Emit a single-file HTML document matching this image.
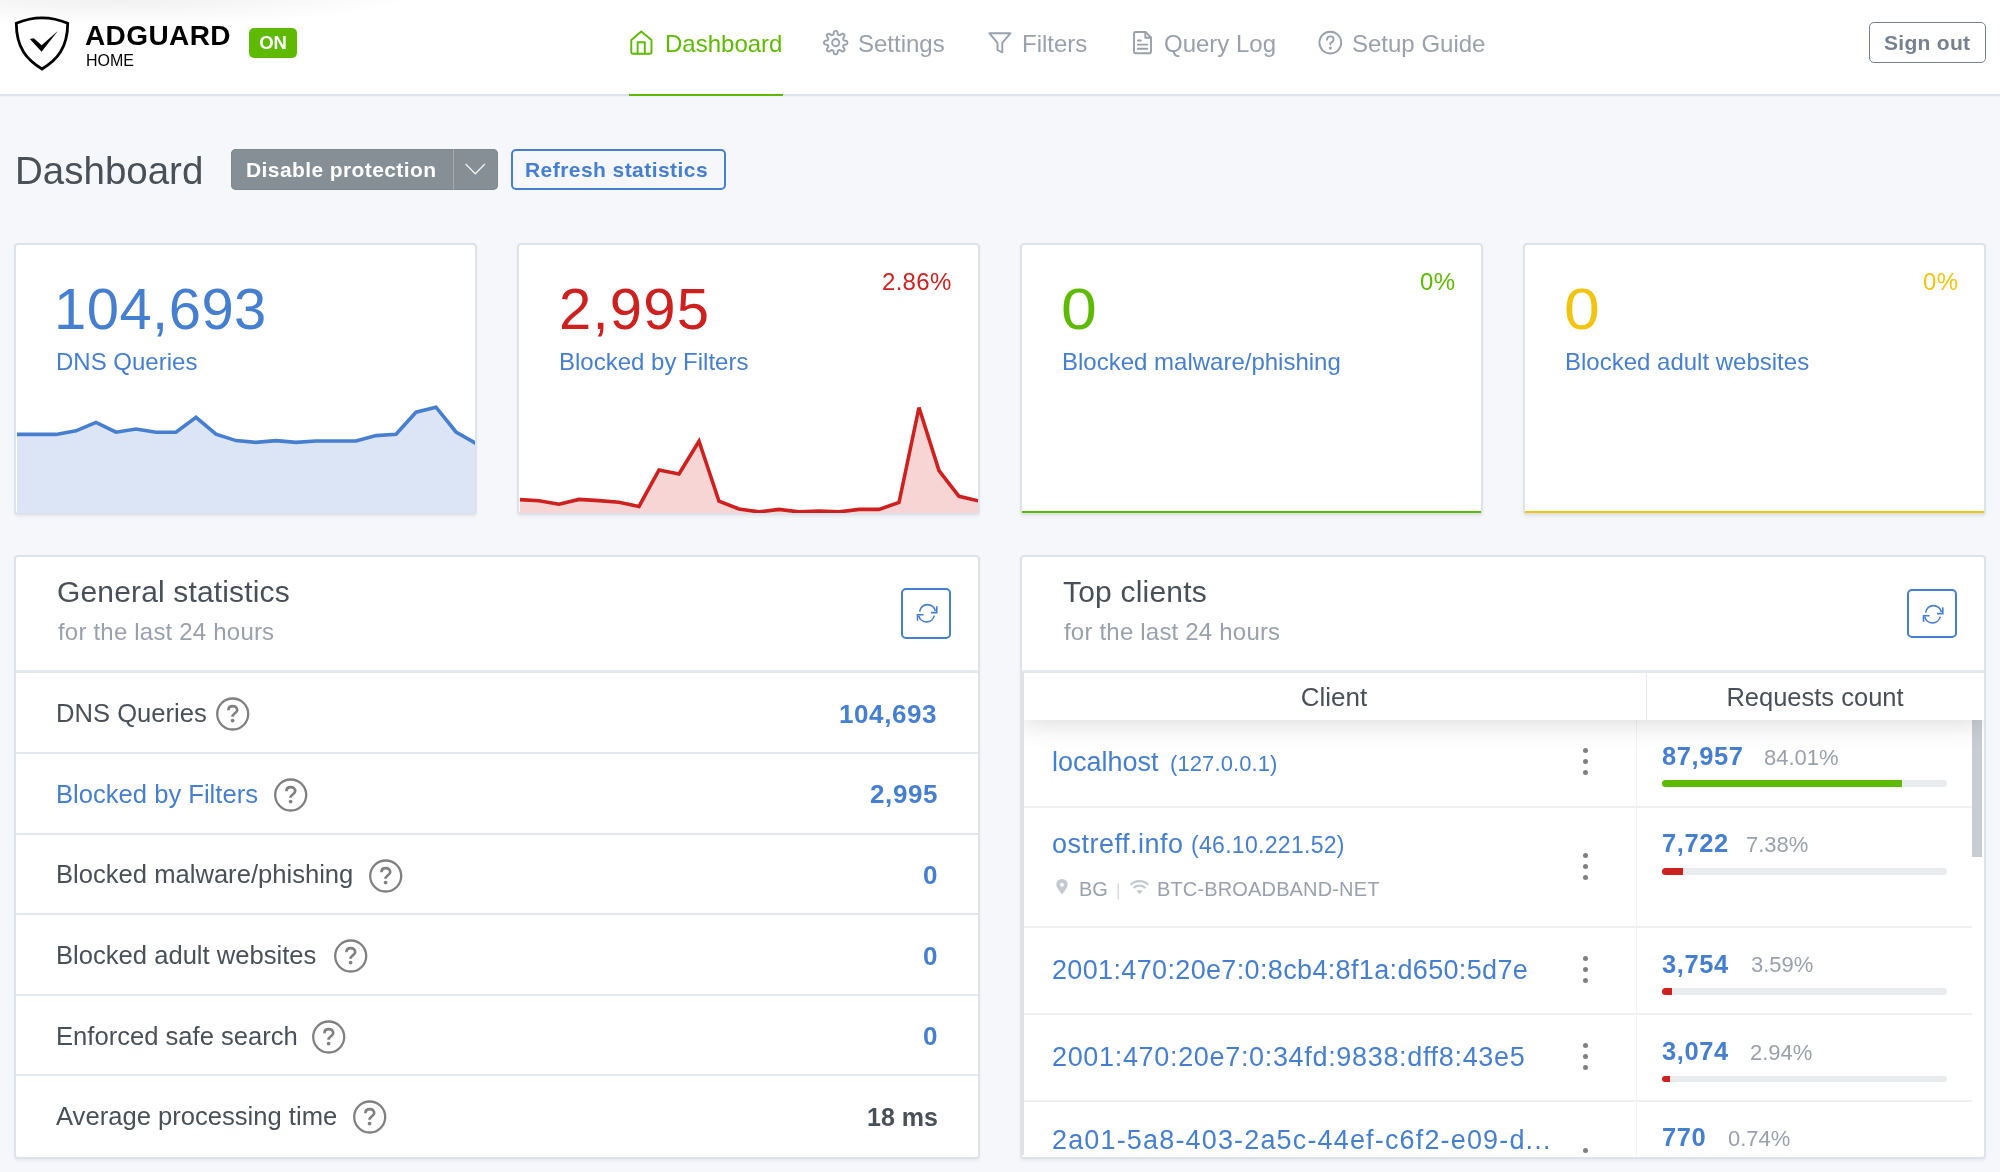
<!DOCTYPE html>
<html><head><meta charset="utf-8"><title>AdGuard Home</title>
<style>
html,body{margin:0;padding:0;}
body{width:2000px;height:1172px;position:relative;overflow:hidden;background:#f5f7fb;font-family:"Liberation Sans",sans-serif;}
.t{position:absolute;line-height:1;white-space:nowrap;will-change:transform;}
body{-webkit-font-smoothing:antialiased;}
.layer{will-change:transform;}
</style></head><body>
<div style="position:absolute;left:0px;top:0px;width:2000px;height:94px;background:#fff;"></div>
<div style="position:absolute;left:0px;top:0px;width:700px;height:60px;background:radial-gradient(ellipse 300px 32px at 120px -6px, rgba(0,0,0,0.065), rgba(0,0,0,0) 100%);"></div>
<div style="position:absolute;left:0px;top:94px;width:2000px;height:2px;background:#dee2eb;"></div>
<div style="position:absolute;left:0px;top:96px;width:2000px;height:1px;background:#f0f2f7;"></div>
<svg style="position:absolute;left:0;top:0" width="300" height="94" viewBox="0 0 300 94">
<path d="M16.3 23.3 C16.3 48 27 60 42 69 C57 60 67.7 48 67.7 23.3 C59 19.5 51 17.8 42 17.8 C33 17.8 25 19.5 16.3 23.3 Z" fill="none" stroke="#000" stroke-width="2.8" stroke-linejoin="miter"/>
<path d="M29.9 38.9 L33.9 38.3 L41.6 45.2 L57.8 31.1 L41.6 51.7 Z" fill="#000"/>
</svg>
<div class="t" style="left:84.5px;top:21.89px;font-size:28px;color:#000;font-weight:700;letter-spacing:0.4px;">ADGUARD</div>
<div class="t" style="left:86px;top:52.85px;font-size:16px;color:#000;font-weight:400;letter-spacing:0px;">HOME</div>
<div style="position:absolute;left:249px;top:28px;width:48px;height:30px;background:#5eba00;border-radius:5px;"></div>
<div class="t" style="left:-227px;width:1000px;text-align:center;top:34.14px;font-size:18.5px;color:#fff;font-weight:700;letter-spacing:0px;">ON</div>
<svg style="position:absolute;left:620px;top:20px" width="900" height="50" viewBox="620 20 900 50" fill="none" stroke-linecap="round" stroke-linejoin="round">
<path d="M631.3 40 L641.3 31.6 L651.5 40 L651.5 52 Q651.5 53.8 649.7 53.8 L633.1 53.8 Q631.3 53.8 631.3 52 Z" stroke="#5eba00" stroke-width="1.9"/>
<path d="M637.6 53.8 L637.6 42.3 L644.8 42.3 L644.8 53.8" stroke="#5eba00" stroke-width="1.9"/>
</svg>
<div class="t" style="left:664.5px;top:31.68px;font-size:24px;color:#5eba00;font-weight:400;letter-spacing:0px;">Dashboard</div>
<div style="position:absolute;left:629px;top:94px;width:154px;height:2.2px;background:#5eba00;"></div>
<svg style="position:absolute;left:0;top:0" width="2000" height="94" fill="none" stroke="#9aa0ac" stroke-width="1.9" stroke-linecap="round" stroke-linejoin="round">
<path d="M847.40 42.60 L847.39 42.91 L847.34 43.21 L847.25 43.51 L847.09 43.80 L846.81 44.06 L846.39 44.29 L845.79 44.47 L845.12 44.60 L844.53 44.72 L844.09 44.85 L843.80 45.00 L843.61 45.17 L843.47 45.35 L843.36 45.54 L843.28 45.74 L843.20 45.94 L843.14 46.15 L843.11 46.38 L843.13 46.63 L843.23 46.94 L843.44 47.34 L843.78 47.85 L844.16 48.41 L844.45 48.96 L844.59 49.42 L844.60 49.81 L844.51 50.12 L844.36 50.40 L844.18 50.65 L843.97 50.87 L843.75 51.08 L843.50 51.26 L843.22 51.41 L842.91 51.50 L842.52 51.49 L842.06 51.35 L841.51 51.06 L840.95 50.68 L840.44 50.34 L840.04 50.13 L839.73 50.03 L839.48 50.01 L839.25 50.04 L839.04 50.10 L838.84 50.18 L838.64 50.26 L838.45 50.37 L838.27 50.51 L838.10 50.70 L837.95 50.99 L837.82 51.43 L837.70 52.02 L837.57 52.69 L837.39 53.29 L837.16 53.71 L836.90 53.99 L836.61 54.15 L836.31 54.24 L836.01 54.29 L835.70 54.30 L835.39 54.29 L835.09 54.24 L834.79 54.15 L834.50 53.99 L834.24 53.71 L834.01 53.29 L833.83 52.69 L833.70 52.02 L833.58 51.43 L833.45 50.99 L833.30 50.70 L833.13 50.51 L832.95 50.37 L832.76 50.26 L832.56 50.18 L832.36 50.10 L832.15 50.04 L831.92 50.01 L831.67 50.03 L831.36 50.13 L830.96 50.34 L830.45 50.68 L829.89 51.06 L829.34 51.35 L828.88 51.49 L828.49 51.50 L828.18 51.41 L827.90 51.26 L827.65 51.08 L827.43 50.87 L827.22 50.65 L827.04 50.40 L826.89 50.12 L826.80 49.81 L826.81 49.42 L826.95 48.96 L827.24 48.41 L827.62 47.85 L827.96 47.34 L828.17 46.94 L828.27 46.63 L828.29 46.38 L828.26 46.15 L828.20 45.94 L828.12 45.74 L828.04 45.54 L827.93 45.35 L827.79 45.17 L827.60 45.00 L827.31 44.85 L826.87 44.72 L826.28 44.60 L825.61 44.47 L825.01 44.29 L824.59 44.06 L824.31 43.80 L824.15 43.51 L824.06 43.21 L824.01 42.91 L824.00 42.60 L824.01 42.29 L824.06 41.99 L824.15 41.69 L824.31 41.40 L824.59 41.14 L825.01 40.91 L825.61 40.73 L826.28 40.60 L826.87 40.48 L827.31 40.35 L827.60 40.20 L827.79 40.03 L827.93 39.85 L828.04 39.66 L828.12 39.46 L828.20 39.26 L828.26 39.05 L828.29 38.82 L828.27 38.57 L828.17 38.26 L827.96 37.86 L827.62 37.35 L827.24 36.79 L826.95 36.24 L826.81 35.78 L826.80 35.39 L826.89 35.08 L827.04 34.80 L827.22 34.55 L827.43 34.33 L827.65 34.12 L827.90 33.94 L828.18 33.79 L828.49 33.70 L828.88 33.71 L829.34 33.85 L829.89 34.14 L830.45 34.52 L830.96 34.86 L831.36 35.07 L831.67 35.17 L831.92 35.19 L832.15 35.16 L832.36 35.10 L832.56 35.02 L832.76 34.94 L832.95 34.83 L833.13 34.69 L833.30 34.50 L833.45 34.21 L833.58 33.77 L833.70 33.18 L833.83 32.51 L834.01 31.91 L834.24 31.49 L834.50 31.21 L834.79 31.05 L835.09 30.96 L835.39 30.91 L835.70 30.90 L836.01 30.91 L836.31 30.96 L836.61 31.05 L836.90 31.21 L837.16 31.49 L837.39 31.91 L837.57 32.51 L837.70 33.18 L837.82 33.77 L837.95 34.21 L838.10 34.50 L838.27 34.69 L838.45 34.83 L838.64 34.94 L838.84 35.02 L839.04 35.10 L839.25 35.16 L839.48 35.19 L839.73 35.17 L840.04 35.07 L840.44 34.86 L840.95 34.52 L841.51 34.14 L842.06 33.85 L842.52 33.71 L842.91 33.70 L843.22 33.79 L843.50 33.94 L843.75 34.12 L843.97 34.33 L844.18 34.55 L844.36 34.80 L844.51 35.08 L844.60 35.39 L844.59 35.78 L844.45 36.24 L844.16 36.79 L843.78 37.35 L843.44 37.86 L843.23 38.26 L843.13 38.57 L843.11 38.82 L843.14 39.05 L843.20 39.26 L843.28 39.46 L843.36 39.66 L843.47 39.85 L843.61 40.03 L843.80 40.20 L844.09 40.35 L844.53 40.48 L845.12 40.60 L845.79 40.73 L846.39 40.91 L846.81 41.14 L847.09 41.40 L847.25 41.69 L847.34 41.99 L847.39 42.29 Z"/>
<circle cx="835.7" cy="42.6" r="3.6"/>
<path d="M989.3 33.2 L1010.5 33.2 L1002.3 42.8 L1002.3 52.3 L997.5 50 L997.5 42.8 Z"/>
<path d="M1134 33.6 Q1134 32 1135.6 32 L1145.5 32 L1151 37.5 L1151 51.6 Q1151 53.2 1149.4 53.2 L1135.6 53.2 Q1134 53.2 1134 51.6 Z"/>
<path d="M1145.3 32.2 L1145.3 37.8 L1150.8 37.8"/>
<path d="M1137.8 40.5 L1140.8 40.5 M1137.8 44.6 L1147.3 44.6 M1137.8 48.7 L1147.3 48.7"/>
<circle cx="1330.3" cy="42.6" r="10.9"/>
<path d="M1327 39.7 Q1327 36.4 1330.3 36.4 Q1333.6 36.4 1333.6 39.5 Q1333.6 41.6 1330.3 43.2 L1330.3 44.6"/>
<circle cx="1330.3" cy="48.1" r="0.6" fill="#9aa0ac"/>
</svg>
<div class="t" style="left:857.8px;top:31.68px;font-size:24px;color:#9aa0ac;font-weight:400;letter-spacing:0px;">Settings</div>
<div class="t" style="left:1022.3px;top:31.68px;font-size:24px;color:#9aa0ac;font-weight:400;letter-spacing:0px;">Filters</div>
<div class="t" style="left:1164px;top:31.68px;font-size:24px;color:#9aa0ac;font-weight:400;letter-spacing:0px;">Query Log</div>
<div class="t" style="left:1351.5px;top:31.68px;font-size:24px;color:#9aa0ac;font-weight:400;letter-spacing:0px;">Setup Guide</div>
<div style="position:absolute;left:1869.2px;top:21.9px;width:116.4px;height:41.6px;border:1.8px solid #77828e;border-radius:5px;box-sizing:border-box;"></div>
<div class="t" style="left:1883.6px;top:32.42px;font-size:21px;color:#76818d;font-weight:700;letter-spacing:0.3px;">Sign out</div>
<div class="t" style="left:14.5px;top:151.70px;font-size:38.5px;color:#495057;font-weight:400;letter-spacing:0px;">Dashboard</div>
<div style="position:absolute;left:231.3px;top:148.5px;width:266.5px;height:41.6px;background:#868e96;border-radius:5px;box-shadow:inset 0 0 0 1px #7f878f;"></div>
<div style="position:absolute;left:453px;top:148.5px;width:1px;height:41.6px;background:#a9a9a9;"></div>
<div class="t" style="left:246px;top:159.32px;font-size:21px;color:#fff;font-weight:700;letter-spacing:0.4px;">Disable protection</div>
<svg style="position:absolute;left:455px;top:150px" width="40" height="40" viewBox="455 150 40 40"><path d="M465.6 164 L475.3 173.8 L484.9 164" fill="none" stroke="#f1f1f1" stroke-width="1.3"/></svg>
<div style="position:absolute;left:511.4px;top:148.6px;width:214.2px;height:41.5px;border:2px solid #467fcf;border-radius:5px;box-sizing:border-box;"></div>
<div class="t" style="left:525.3px;top:159.32px;font-size:21px;color:#467fcf;font-weight:700;letter-spacing:0.44px;">Refresh statistics</div>
<div style="position:absolute;left:14px;top:243px;width:463px;height:272px;background:#fff;border:2px solid #dee3eb;border-radius:4px;box-sizing:border-box;box-shadow:0 2px 3px rgba(0,0,0,0.05);overflow:hidden;"></div>
<svg style="position:absolute;left:16px;top:243px" width="459" height="270" viewBox="16 243 459 270">
<polygon points="17,515 17,434.4 17.0,434.4 36.0,434.4 56.0,434.4 76.0,430.8 96.0,422.4 116.0,432.2 136.0,429.0 156.0,432.2 176.0,432.2 196.0,417.4 216.0,434.2 236.0,440.6 256.0,442.4 276.0,440.6 296.0,442.4 316.0,441.0 336.0,441.0 356.0,441.0 376.0,435.6 396.0,434.2 416.0,412.2 436.0,407.2 456.0,432.0 476.0,443.4 476,515" fill="#dbe5f5"/>
<polyline points="17.0,434.4 36.0,434.4 56.0,434.4 76.0,430.8 96.0,422.4 116.0,432.2 136.0,429.0 156.0,432.2 176.0,432.2 196.0,417.4 216.0,434.2 236.0,440.6 256.0,442.4 276.0,440.6 296.0,442.4 316.0,441.0 336.0,441.0 356.0,441.0 376.0,435.6 396.0,434.2 416.0,412.2 436.0,407.2 456.0,432.0 476.0,443.4" fill="none" stroke="#467fcf" stroke-width="3.6" stroke-linejoin="miter" stroke-miterlimit="3"/>
</svg>
<div class="t" style="left:53.5px;top:280.29px;font-size:58px;color:#467fcf;font-weight:400;letter-spacing:0.45px;">104,693</div>
<div class="t" style="left:55.5px;top:349.88px;font-size:24px;color:#467fcf;font-weight:400;letter-spacing:0px;">DNS Queries</div>
<div style="position:absolute;left:517px;top:243px;width:463px;height:272px;background:#fff;border:2px solid #dee3eb;border-radius:4px;box-sizing:border-box;box-shadow:0 2px 3px rgba(0,0,0,0.05);overflow:hidden;"></div>
<svg style="position:absolute;left:519px;top:243px" width="459" height="270" viewBox="519 243 459 270">
<polygon points="520,515 520,499.6 520.0,499.6 539.0,500.8 559.0,504.2 579.0,499.4 599.0,500.6 619.0,502.2 639.0,506.4 659.0,470.0 679.0,474.0 699.0,441.2 719.0,501.2 739.0,509.0 759.0,511.9 779.0,509.4 799.0,511.9 819.0,511.0 839.0,511.9 859.0,509.4 879.0,509.4 899.0,502.5 919.0,407.5 939.0,470.6 959.0,496.3 979.0,501.0 979,515" fill="#f7d5d5"/>
<polyline points="520.0,499.6 539.0,500.8 559.0,504.2 579.0,499.4 599.0,500.6 619.0,502.2 639.0,506.4 659.0,470.0 679.0,474.0 699.0,441.2 719.0,501.2 739.0,509.0 759.0,511.9 779.0,509.4 799.0,511.9 819.0,511.0 839.0,511.9 859.0,509.4 879.0,509.4 899.0,502.5 919.0,407.5 939.0,470.6 959.0,496.3 979.0,501.0" fill="none" stroke="#cd201f" stroke-width="3.6" stroke-linejoin="miter" stroke-miterlimit="3"/>
</svg>
<div class="t" style="left:559.0px;top:280.29px;font-size:58px;color:#cd201f;font-weight:400;letter-spacing:1.2px;">2,995</div>
<div class="t" style="left:558.5px;top:349.88px;font-size:24px;color:#467fcf;font-weight:400;letter-spacing:0px;">Blocked by Filters</div>
<div class="t" style="right:1048px;top:269.68px;font-size:24px;color:#cd201f;font-weight:400;letter-spacing:0.3px;">2.86%</div>
<div style="position:absolute;left:1020px;top:243px;width:463px;height:272px;background:#fff;border:2px solid #dee3eb;border-radius:4px;box-sizing:border-box;box-shadow:0 2px 3px rgba(0,0,0,0.05);overflow:hidden;"></div>
<div style="position:absolute;left:1022px;top:511px;width:459px;height:2px;background:#5eba00;"></div>
<div class="t" style="left:1060.5px;top:280.29px;font-size:58px;color:#5eba00;font-weight:400;letter-spacing:0px;transform:scaleX(1.11);transform-origin:0 0;">0</div>
<div class="t" style="left:1061.5px;top:349.88px;font-size:24px;color:#467fcf;font-weight:400;letter-spacing:0px;">Blocked malware/phishing</div>
<div class="t" style="right:545px;top:269.68px;font-size:24px;color:#5eba00;font-weight:400;letter-spacing:0.3px;">0%</div>
<div style="position:absolute;left:1523px;top:243px;width:463px;height:272px;background:#fff;border:2px solid #dee3eb;border-radius:4px;box-sizing:border-box;box-shadow:0 2px 3px rgba(0,0,0,0.05);overflow:hidden;"></div>
<div style="position:absolute;left:1525px;top:511px;width:459px;height:2px;background:#f1c40f;"></div>
<div class="t" style="left:1563.5px;top:280.29px;font-size:58px;color:#f1c40f;font-weight:400;letter-spacing:0px;transform:scaleX(1.11);transform-origin:0 0;">0</div>
<div class="t" style="left:1564.5px;top:349.88px;font-size:24px;color:#467fcf;font-weight:400;letter-spacing:0px;">Blocked adult websites</div>
<div class="t" style="right:42px;top:269.68px;font-size:24px;color:#f1c40f;font-weight:400;letter-spacing:0.3px;">0%</div>
<div style="position:absolute;left:14px;top:555px;width:966px;height:603.5px;background:#fff;border:2px solid #dee3eb;border-radius:4px;box-sizing:border-box;box-shadow:0 2px 3px rgba(0,0,0,0.05);"></div>
<div class="t" style="left:57px;top:576.60px;font-size:30px;color:#495057;font-weight:400;letter-spacing:0.15px;">General statistics</div>
<div class="t" style="left:57.5px;top:620.18px;font-size:24px;color:#9aa0ac;font-weight:400;letter-spacing:0.2px;">for the last 24 hours</div>
<div style="position:absolute;left:901.2px;top:588.3px;width:49.8px;height:50.3px;border:2px solid #467fcf;border-radius:5px;box-sizing:border-box;"></div>
<svg style="position:absolute;left:901.2px;top:588.3px" width="50" height="50" viewBox="0 0 50 50" fill="none" stroke="#467fcf" stroke-width="1.6">
<path d="M18.6 23.6 A8 8 0 0 1 34.4 23.2"/><path d="M35.8 18.3 L35.8 24.6 L30 24.6"/>
<path d="M33.3 27.6 A8 8 0 0 1 17.7 27.8"/><path d="M16.5 32.8 L16.5 26.7 L22.6 26.7"/>
</svg>
<div style="position:absolute;left:16px;top:670px;width:962px;height:3px;background:#e4e8ef;"></div>
<div class="t" style="left:55.8px;top:701.02px;font-size:25.6px;color:#495057;font-weight:400;letter-spacing:0px;">DNS Queries</div>
<div class="t" style="right:1062.4px;top:700.69px;font-size:26px;color:#467fcf;font-weight:700;letter-spacing:0.6px;">104,693</div>
<svg style="position:absolute;left:216.3px;top:697.2px" width="34" height="34" viewBox="0 0 34 34" fill="none" stroke="#808080"><circle cx="16.7" cy="17" r="15.5" stroke-width="2.3"/>
<path d="M12.4 13.2 C12.4 10.6 14.3 9.2 16.8 9.2 C19.4 9.2 21.2 10.9 21.2 13.2 C21.2 16 16.5 16.6 16.5 19.8" stroke-width="2.7"/>
<circle cx="16.6" cy="23.6" r="1.85" fill="#808080" stroke="none"/></svg>
<div style="position:absolute;left:16px;top:752px;width:962px;height:2px;background:#e3e7ee;"></div>
<div class="t" style="left:55.8px;top:781.52px;font-size:25.6px;color:#467fcf;font-weight:400;letter-spacing:0px;">Blocked by Filters</div>
<div class="t" style="right:1062.4px;top:781.19px;font-size:26px;color:#467fcf;font-weight:700;letter-spacing:0.6px;">2,995</div>
<svg style="position:absolute;left:273.5px;top:777.7px" width="34" height="34" viewBox="0 0 34 34" fill="none" stroke="#808080"><circle cx="16.7" cy="17" r="15.5" stroke-width="2.3"/>
<path d="M12.4 13.2 C12.4 10.6 14.3 9.2 16.8 9.2 C19.4 9.2 21.2 10.9 21.2 13.2 C21.2 16 16.5 16.6 16.5 19.8" stroke-width="2.7"/>
<circle cx="16.6" cy="23.6" r="1.85" fill="#808080" stroke="none"/></svg>
<div style="position:absolute;left:16px;top:833px;width:962px;height:2px;background:#e3e7ee;"></div>
<div class="t" style="left:55.8px;top:862.32px;font-size:25.6px;color:#495057;font-weight:400;letter-spacing:0px;">Blocked malware/phishing</div>
<div class="t" style="right:1062.4px;top:861.99px;font-size:26px;color:#467fcf;font-weight:700;letter-spacing:0.6px;">0</div>
<svg style="position:absolute;left:369px;top:858.5px" width="34" height="34" viewBox="0 0 34 34" fill="none" stroke="#808080"><circle cx="16.7" cy="17" r="15.5" stroke-width="2.3"/>
<path d="M12.4 13.2 C12.4 10.6 14.3 9.2 16.8 9.2 C19.4 9.2 21.2 10.9 21.2 13.2 C21.2 16 16.5 16.6 16.5 19.8" stroke-width="2.7"/>
<circle cx="16.6" cy="23.6" r="1.85" fill="#808080" stroke="none"/></svg>
<div style="position:absolute;left:16px;top:913px;width:962px;height:2px;background:#e3e7ee;"></div>
<div class="t" style="left:55.8px;top:943.02px;font-size:25.6px;color:#495057;font-weight:400;letter-spacing:0px;">Blocked adult websites</div>
<div class="t" style="right:1062.4px;top:942.69px;font-size:26px;color:#467fcf;font-weight:700;letter-spacing:0.6px;">0</div>
<svg style="position:absolute;left:334px;top:939.2px" width="34" height="34" viewBox="0 0 34 34" fill="none" stroke="#808080"><circle cx="16.7" cy="17" r="15.5" stroke-width="2.3"/>
<path d="M12.4 13.2 C12.4 10.6 14.3 9.2 16.8 9.2 C19.4 9.2 21.2 10.9 21.2 13.2 C21.2 16 16.5 16.6 16.5 19.8" stroke-width="2.7"/>
<circle cx="16.6" cy="23.6" r="1.85" fill="#808080" stroke="none"/></svg>
<div style="position:absolute;left:16px;top:994px;width:962px;height:2px;background:#e3e7ee;"></div>
<div class="t" style="left:55.8px;top:1023.52px;font-size:25.6px;color:#495057;font-weight:400;letter-spacing:0px;">Enforced safe search</div>
<div class="t" style="right:1062.4px;top:1023.19px;font-size:26px;color:#467fcf;font-weight:700;letter-spacing:0.6px;">0</div>
<svg style="position:absolute;left:312px;top:1019.7px" width="34" height="34" viewBox="0 0 34 34" fill="none" stroke="#808080"><circle cx="16.7" cy="17" r="15.5" stroke-width="2.3"/>
<path d="M12.4 13.2 C12.4 10.6 14.3 9.2 16.8 9.2 C19.4 9.2 21.2 10.9 21.2 13.2 C21.2 16 16.5 16.6 16.5 19.8" stroke-width="2.7"/>
<circle cx="16.6" cy="23.6" r="1.85" fill="#808080" stroke="none"/></svg>
<div style="position:absolute;left:16px;top:1074px;width:962px;height:2px;background:#e3e7ee;"></div>
<div class="t" style="left:55.8px;top:1104.02px;font-size:25.6px;color:#495057;font-weight:400;letter-spacing:0px;">Average processing time</div>
<div class="t" style="right:1062.4px;top:1104.53px;font-size:25px;color:#495057;font-weight:700;letter-spacing:0px;">18 ms</div>
<svg style="position:absolute;left:352.5px;top:1100.2px" width="34" height="34" viewBox="0 0 34 34" fill="none" stroke="#808080"><circle cx="16.7" cy="17" r="15.5" stroke-width="2.3"/>
<path d="M12.4 13.2 C12.4 10.6 14.3 9.2 16.8 9.2 C19.4 9.2 21.2 10.9 21.2 13.2 C21.2 16 16.5 16.6 16.5 19.8" stroke-width="2.7"/>
<circle cx="16.6" cy="23.6" r="1.85" fill="#808080" stroke="none"/></svg>
<div style="position:absolute;left:1020px;top:555px;width:966px;height:603.5px;background:#fff;border:2px solid #dee3eb;border-radius:4px;box-sizing:border-box;box-shadow:0 2px 3px rgba(0,0,0,0.05);overflow:hidden;"></div>
<div class="t" style="left:1063px;top:576.60px;font-size:30px;color:#495057;font-weight:400;letter-spacing:0.2px;">Top clients</div>
<div class="t" style="left:1063.5px;top:620.18px;font-size:24px;color:#9aa0ac;font-weight:400;letter-spacing:0.2px;">for the last 24 hours</div>
<div style="position:absolute;left:1907.3px;top:588.9px;width:49.6px;height:49.3px;border:2px solid #467fcf;border-radius:5px;box-sizing:border-box;"></div>
<svg style="position:absolute;left:1907.3px;top:588.9px" width="50" height="50" viewBox="0 0 50 50" fill="none" stroke="#467fcf" stroke-width="1.6">
<path d="M18.6 23.6 A8 8 0 0 1 34.4 23.2"/><path d="M35.8 18.3 L35.8 24.6 L30 24.6"/>
<path d="M33.3 27.6 A8 8 0 0 1 17.7 27.8"/><path d="M16.5 32.8 L16.5 26.7 L22.6 26.7"/>
</svg>
<div style="position:absolute;left:1022px;top:670px;width:962px;height:3px;background:#e4e8ef;"></div>
<div style="position:absolute;left:1022px;top:673px;width:962px;height:484px;overflow:hidden;">
<div style="position:absolute;left:0px;top:133px;width:950px;height:2px;background:#f0f0f0;"></div>
<div style="position:absolute;left:0px;top:253px;width:950px;height:2px;background:#f0f0f0;"></div>
<div style="position:absolute;left:0px;top:340px;width:950px;height:2px;background:#f0f0f0;"></div>
<div style="position:absolute;left:0px;top:427px;width:950px;height:2px;background:#f0f0f0;"></div>
<div style="position:absolute;left:0px;top:0px;width:1.5px;height:482px;background:#e2e2e2;z-index:5;"></div>
<div style="position:absolute;left:614.3px;top:47px;width:1px;height:482px;background:#f3f3f3;"></div>
<div style="position:absolute;left:0px;top:0px;width:962px;height:47px;background:#fff;box-shadow:0 0 30px rgba(0,0,0,0.18);z-index:2;"></div>
<div style="position:absolute;left:624px;top:0px;width:1px;height:47px;background:#e9ebee;z-index:3;"></div>
<div style="position:absolute;left:950.4000000000001px;top:47px;width:9.8px;height:137px;background:#c9ccd3;z-index:1;"></div>
</div>
<div class="t" style="left:834px;width:1000px;text-align:center;top:684.49px;font-size:26px;color:#495057;font-weight:400;letter-spacing:0px;z-index:4;">Client</div>
<div class="t" style="left:1314.5px;width:1000px;text-align:center;top:684.91px;font-size:25.5px;color:#495057;font-weight:400;letter-spacing:0px;z-index:4;">Requests count</div>
<div style="position:absolute;left:0;top:720px;width:2000px;height:437.5px;overflow:hidden;">
<div class="t" style="left:1052px;top:29.14px;font-size:27px;color:#467fcf;font-weight:400;letter-spacing:0px;">localhost</div>
<div class="t" style="left:1169.5px;top:33.37px;font-size:22px;color:#467fcf;font-weight:400;letter-spacing:0.1px;">(127.0.0.1)</div>
<div style="position:absolute;left:1582.5px;top:27.700000000000045px;width:5px;height:5px;border-radius:50%;background:#808080"></div>
<div style="position:absolute;left:1582.5px;top:38.60000000000002px;width:5px;height:5px;border-radius:50%;background:#808080"></div>
<div style="position:absolute;left:1582.5px;top:49.5px;width:5px;height:5px;border-radius:50%;background:#808080"></div>
<div class="t" style="left:1661.8px;top:24.01px;font-size:25.5px;color:#467fcf;font-weight:700;letter-spacing:0.6px;">87,957</div>
<div class="t" style="left:1763.5px;top:26.97px;font-size:22px;color:#9aa0ac;font-weight:400;letter-spacing:0px;">84.01%</div>
<div style="position:absolute;left:1662.2px;top:60px;width:284.6px;height:6.6px;background:#e9ecef;border-radius:4px;"></div>
<div style="position:absolute;left:1662.2px;top:60px;width:239.79999999999995px;height:6.6px;background:#5eba00;border-radius:4px 0 0 4px;"></div>
<div class="t" style="left:1052px;top:110.94px;font-size:27px;color:#467fcf;font-weight:400;letter-spacing:0.5px;">ostreff.info</div>
<div class="t" style="left:1191px;top:114.33px;font-size:23px;color:#467fcf;font-weight:400;letter-spacing:0.3px;">(46.10.221.52)</div>
<svg style="position:absolute;left:1050px;top:155.60000000000002px" width="110" height="26" viewBox="1050 875.6 110 26">
<path d="M1062 894.2 C1058.5 889.5 1056.3 886.5 1056.3 884.2 A5.7 5.7 0 0 1 1067.7 884.2 C1067.7 886.5 1065.5 889.5 1062 894.2 Z" fill="#c4c8cf"/>
<circle cx="1062" cy="884.3" r="2" fill="#fff"/>
<rect x="1117.6" y="883" width="1.3" height="16" fill="#d3d6db"/>
<path d="M1130.5 884.3 A13 13 0 0 1 1148.5 884.3" fill="none" stroke="#c4c8cf" stroke-width="2.2"/>
<path d="M1133.6 887.6 A8.5 8.5 0 0 1 1145.4 887.6" fill="none" stroke="#c4c8cf" stroke-width="2.2"/>
<path d="M1136.6 890.8 L1139.5 893.8 L1142.4 890.8 A4 4 0 0 0 1136.6 890.8 Z" fill="#c4c8cf"/>
</svg>
<div class="t" style="left:1079.3px;top:158.67px;font-size:20px;color:#9aa0ac;font-weight:400;letter-spacing:0px;">BG</div>
<div class="t" style="left:1156.6px;top:158.67px;font-size:20px;color:#9aa0ac;font-weight:400;letter-spacing:0.15px;">BTC-BROADBAND-NET</div>
<div style="position:absolute;left:1582.5px;top:133.20000000000005px;width:5px;height:5px;border-radius:50%;background:#808080"></div>
<div style="position:absolute;left:1582.5px;top:144.10000000000002px;width:5px;height:5px;border-radius:50%;background:#808080"></div>
<div style="position:absolute;left:1582.5px;top:155.0px;width:5px;height:5px;border-radius:50%;background:#808080"></div>
<div class="t" style="left:1661.8px;top:110.71px;font-size:25.5px;color:#467fcf;font-weight:700;letter-spacing:0.6px;">7,722</div>
<div class="t" style="left:1745.5px;top:113.67px;font-size:22px;color:#9aa0ac;font-weight:400;letter-spacing:0px;">7.38%</div>
<div style="position:absolute;left:1662.2px;top:148px;width:284.6px;height:6.6px;background:#e9ecef;border-radius:4px;"></div>
<div style="position:absolute;left:1662.2px;top:148px;width:20.799999999999955px;height:6.6px;background:#cd201f;border-radius:4px 0 0 4px;"></div>
<div class="t" style="left:1052px;top:237.04px;font-size:27px;color:#467fcf;font-weight:400;letter-spacing:0.35px;">2001:470:20e7:0:8cb4:8f1a:d650:5d7e</div>
<div style="position:absolute;left:1582.5px;top:235.70000000000005px;width:5px;height:5px;border-radius:50%;background:#808080"></div>
<div style="position:absolute;left:1582.5px;top:246.60000000000002px;width:5px;height:5px;border-radius:50%;background:#808080"></div>
<div style="position:absolute;left:1582.5px;top:257.5px;width:5px;height:5px;border-radius:50%;background:#808080"></div>
<div class="t" style="left:1661.8px;top:231.51px;font-size:25.5px;color:#467fcf;font-weight:700;letter-spacing:0.6px;">3,754</div>
<div class="t" style="left:1751.1px;top:234.47px;font-size:22px;color:#9aa0ac;font-weight:400;letter-spacing:0px;">3.59%</div>
<div style="position:absolute;left:1662.2px;top:268.4px;width:284.6px;height:6.6px;background:#e9ecef;border-radius:4px;"></div>
<div style="position:absolute;left:1662.2px;top:268.4px;width:9.799999999999955px;height:6.6px;background:#cd201f;border-radius:4px 0 0 4px;"></div>
<div class="t" style="left:1052px;top:323.74px;font-size:27px;color:#467fcf;font-weight:400;letter-spacing:0.67px;">2001:470:20e7:0:34fd:9838:dff8:43e5</div>
<div style="position:absolute;left:1582.5px;top:322.6999999999998px;width:5px;height:5px;border-radius:50%;background:#808080"></div>
<div style="position:absolute;left:1582.5px;top:333.5999999999999px;width:5px;height:5px;border-radius:50%;background:#808080"></div>
<div style="position:absolute;left:1582.5px;top:344.5px;width:5px;height:5px;border-radius:50%;background:#808080"></div>
<div class="t" style="left:1661.8px;top:319.01px;font-size:25.5px;color:#467fcf;font-weight:700;letter-spacing:0.6px;">3,074</div>
<div class="t" style="left:1749.5px;top:321.97px;font-size:22px;color:#9aa0ac;font-weight:400;letter-spacing:0px;">2.94%</div>
<div style="position:absolute;left:1662.2px;top:355.70000000000005px;width:284.6px;height:6.6px;background:#e9ecef;border-radius:4px;"></div>
<div style="position:absolute;left:1662.2px;top:355.70000000000005px;width:8.299999999999955px;height:6.6px;background:#cd201f;border-radius:4px 0 0 4px;"></div>
<div class="t" style="left:1052px;top:406.64px;font-size:27px;color:#467fcf;font-weight:400;letter-spacing:1.16px;">2a01-5a8-403-2a5c-44ef-c6f2-e09-d...</div>
<div style="position:absolute;left:1582.5px;top:428.0px;width:5px;height:5px;border-radius:50%;background:#808080"></div>
<div style="position:absolute;left:1582.5px;top:438.9000000000001px;width:5px;height:5px;border-radius:50%;background:#808080"></div>
<div style="position:absolute;left:1582.5px;top:449.8000000000002px;width:5px;height:5px;border-radius:50%;background:#808080"></div>
<div class="t" style="left:1661.8px;top:405.21px;font-size:25.5px;color:#467fcf;font-weight:700;letter-spacing:0.6px;">770</div>
<div class="t" style="left:1727.5px;top:408.17px;font-size:22px;color:#9aa0ac;font-weight:400;letter-spacing:0px;">0.74%</div>
</div>
</body></html>
